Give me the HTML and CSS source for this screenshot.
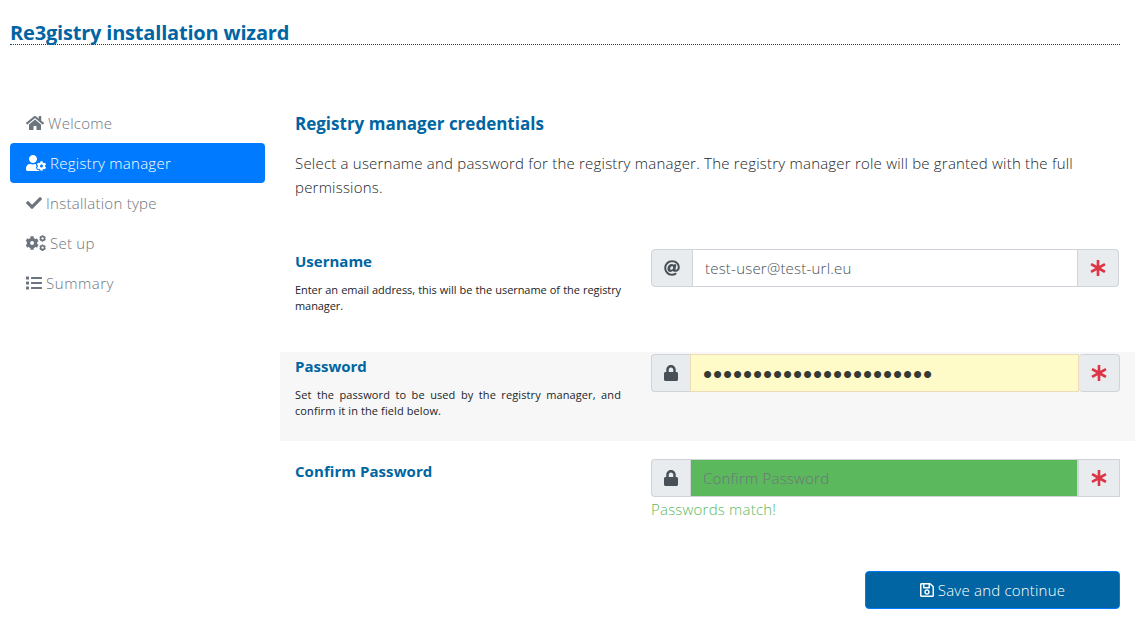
FILE: index.html
```html
<!DOCTYPE html>
<html lang="en">
<head>
<meta charset="utf-8">
<title>Re3gistry installation wizard</title>
<link rel="stylesheet" href="styles.css">
</head>
<body>
<svg class="sprite" aria-hidden="true">
  <symbol id="lock" viewBox="0 0 448 512"><path d="M400 224h-24v-72C376 68.2 307.8 0 224 0S72 68.2 72 152v72H48c-26.5 0-48 21.5-48 48v192c0 26.5 21.5 48 48 48h352c26.5 0 48-21.5 48-48V272c0-26.5-21.5-48-48-48zm-104 0H152v-72c0-39.7 32.3-72 72-72s72 32.3 72 72v72z"/></symbol>
  <symbol id="asterisk" viewBox="0 0 512 512"><path d="M256 42v428M70 152l372 208M442 152L70 360" fill="none" stroke="currentColor" stroke-width="84" stroke-linecap="square"/></symbol>
</svg>
<header class="header"><h1 class="title"><span>Re3gistry installation wizard</span></h1></header>
<div class="layout">
  <nav class="nav">
    <a class="item"><svg class="icon w18" viewBox="0 0 576 512"><path d="M280.37 148.26L96 300.11V464a16 16 0 0 0 16 16l112.06-.29a16 16 0 0 0 15.92-16V368a16 16 0 0 1 16-16h64a16 16 0 0 1 16 16v95.64a16 16 0 0 0 16 16.05L464 480a16 16 0 0 0 16-16V300L295.67 148.26a12.19 12.19 0 0 0-15.3 0zM571.6 251.47L488 182.56V44.05a12 12 0 0 0-12-12h-56a12 12 0 0 0-12 12v72.61L318.47 43a48 48 0 0 0-61 0L4.34 251.47a12 12 0 0 0-1.6 16.9l25.5 31A12 12 0 0 0 45.15 301l235.22-193.74a12.19 12.19 0 0 1 15.3 0L530.9 301a12 12 0 0 0 16.9-1.6l25.5-31a12 12 0 0 0-1.7-16.93z"/></svg><span>Welcome</span></a>
    <a class="item active"><svg class="icon w20" viewBox="0 0 640 512"><path d="M610.5 373.3c2.6-14.1 2.6-28.5 0-42.6l25.8-14.9c3-1.7 4.3-5.2 3.3-8.5-6.7-21.6-18.2-41.2-33.2-57.4-2.3-2.5-6-3.1-9-1.4l-25.8 14.9c-10.9-9.3-23.4-16.5-36.9-21.3v-29.8c0-3.4-2.4-6.4-5.7-7.1-22.3-5-45-4.8-66.2 0-3.3.7-5.7 3.7-5.7 7.1v29.8c-13.5 4.8-26 12-36.9 21.3l-25.8-14.9c-2.9-1.7-6.7-1.1-9 1.4-15 16.2-26.5 35.8-33.2 57.4-1 3.3.4 6.8 3.3 8.5l25.8 14.9c-2.6 14.1-2.6 28.5 0 42.6l-25.8 14.9c-3 1.7-4.3 5.2-3.3 8.5 6.7 21.6 18.2 41.1 33.2 57.4 2.3 2.5 6 3.1 9 1.4l25.8-14.9c10.9 9.3 23.4 16.5 36.9 21.3v29.8c0 3.4 2.4 6.4 5.7 7.1 22.3 5 45 4.8 66.2 0 3.3-.7 5.7-3.7 5.7-7.1v-29.8c13.5-4.8 26-12 36.9-21.3l25.8 14.9c2.9 1.7 6.7 1.1 9-1.4 15-16.2 26.5-35.8 33.2-57.4 1-3.3-.4-6.8-3.3-8.5l-25.8-14.9zM496 400.5c-26.8 0-48.5-21.8-48.5-48.5s21.8-48.5 48.5-48.5 48.5 21.8 48.5 48.5-21.7 48.5-48.5 48.5zM224 256c70.7 0 128-57.3 128-128S294.7 0 224 0 96 57.3 96 128s57.3 128 128 128zm201.2 226.5c-2.3-1.2-4.6-2.6-6.8-3.9l-7.9 4.6c-6 3.4-12.8 5.3-19.6 5.3-10.9 0-21.4-4.6-28.9-12.6-18.3-19.8-32.3-43.9-40.2-69.6-5.5-17.7 1.9-36.4 17.9-45.7l7.9-4.6c-.1-2.6-.1-5.2 0-7.8l-7.9-4.6c-16-9.2-23.4-28-17.9-45.7.9-2.9 2.2-5.8 3.2-8.7-3.8-.3-7.5-1.2-11.4-1.2h-16.7c-22.2 10.2-46.9 16-72.9 16s-50.6-5.8-72.9-16h-16.7C60.2 288 0 348.2 0 422.4V464c0 26.5 21.5 48 48 48h352c10.1 0 19.5-3.2 27.2-8.5-1.2-3.8-2-7.7-2-11.8v-9.2z"/></svg><span>Registry manager</span></a>
    <a class="item"><svg class="icon w16" viewBox="0 0 512 512"><path d="M173.898 439.404l-166.4-166.4c-9.997-9.997-9.997-26.206 0-36.204l36.203-36.204c9.997-9.998 26.207-9.998 36.204 0L192 312.69 432.095 72.596c9.997-9.997 26.207-9.997 36.204 0l36.203 36.204c9.997 9.997 9.997 26.206 0 36.204l-294.4 294.401c-9.998 9.997-26.207 9.997-36.204-.001z"/></svg><span>Installation type</span></a>
    <a class="item"><svg class="icon w20" viewBox="0 0 640 512"><g fill="none" stroke="currentColor"><circle cx="194" cy="256" r="116" stroke-width="106"/><path stroke-width="104" d="M194 42v72M194 398v72M12 151l62 35M314 326l62 35M12 361l62-35M314 186l62-35"/><circle cx="530" cy="108" r="62" stroke-width="50"/><path stroke-width="54" d="M530 4v34M530 178v34M440 56l32 18M588 142l32 18M440 160l32-18M588 74l32-18"/><circle cx="530" cy="404" r="62" stroke-width="50"/><path stroke-width="54" d="M530 300v34M530 474v34M440 352l32 18M588 438l32 18M440 456l32-18M588 370l32-18"/></g></svg><span>Set up</span></a>
    <a class="item"><svg class="icon w16" viewBox="0 0 512 512"><path d="M80 368H16a16 16 0 0 0-16 16v64a16 16 0 0 0 16 16h64a16 16 0 0 0 16-16v-64a16 16 0 0 0-16-16zm0-320H16A16 16 0 0 0 0 64v64a16 16 0 0 0 16 16h64a16 16 0 0 0 16-16V64a16 16 0 0 0-16-16zm0 160H16a16 16 0 0 0-16 16v64a16 16 0 0 0 16 16h64a16 16 0 0 0 16-16v-64a16 16 0 0 0-16-16zm416 176H176a16 16 0 0 0-16 16v32a16 16 0 0 0 16 16h320a16 16 0 0 0 16-16v-32a16 16 0 0 0-16-16zm0-320H176a16 16 0 0 0-16 16v32a16 16 0 0 0 16 16h320a16 16 0 0 0 16-16V80a16 16 0 0 0-16-16zm0 160H176a16 16 0 0 0-16 16v32a16 16 0 0 0 16 16h320a16 16 0 0 0 16-16v-32a16 16 0 0 0-16-16z"/></svg><span class="wide">Summary</span></a>
  </nav>
  <main class="main">
    <h2 class="heading">Registry manager credentials</h2>
    <p class="intro">Select a username and password for the registry manager. The registry manager role will be granted with the full<br>permissions.</p>
    <section class="row">
      <div class="info"><h3 class="label">Username</h3><p class="help tight">Enter an email address, this will be the username of the registry manager.</p></div>
      <div class="field"><div class="group user">
        <span class="addon first"><svg class="icon w16" viewBox="0 0 512 512"><path d="M256 8C118.941 8 8 118.919 8 256c0 137.059 110.919 248 248 248 48.154 0 95.342-14.14 135.408-40.223 12.005-7.815 14.625-24.288 5.552-35.372l-10.177-12.433c-7.671-9.371-21.179-11.667-31.373-5.129C325.92 429.757 291.314 440 256 440c-101.458 0-184-82.542-184-184S154.542 72 256 72c100.139 0 184 57.619 184 160 0 38.786-21.093 79.742-58.17 83.693-17.349-.454-16.91-12.857-13.476-30.024l23.433-121.11C394.653 149.75 383.308 136 368.225 136h-44.981a13.518 13.518 0 0 0-13.432 11.993l-.01.092c-14.697-17.901-40.448-21.775-59.971-21.775-74.58 0-137.831 62.234-137.831 151.46 0 65.303 36.785 105.87 96 105.87 26.984 0 57.369-15.637 74.991-38.333 9.522 34.104 40.613 34.103 70.71 34.103C462.609 379.41 504 307.798 504 232 504 95.653 394.023 8 256 8zm-21.68 304.43c-22.249 0-36.07-15.623-36.07-40.771 0-44.993 30.779-72.729 58.63-72.729 22.292 0 35.601 15.241 35.601 40.77 0 45.061-33.875 72.73-58.161 72.73z"/></svg></span>
        <div class="input">test-user@test-url.eu</div>
        <span class="addon last"><svg class="icon w16"><use href="#asterisk"/></svg></span>
      </div></div>
    </section>
    <section class="row shaded">
      <div class="info"><h3 class="label">Password</h3><p class="help">Set the password to be used by the registry manager, and confirm it in the field below.</p></div>
      <div class="field"><div class="group">
        <span class="addon first"><svg class="icon w14"><use href="#lock"/></svg></span>
        <div class="input filled">•••••••••••••••••••••••</div>
        <span class="addon last rounded"><svg class="icon w16"><use href="#asterisk"/></svg></span>
      </div></div>
    </section>
    <section class="row">
      <div class="info"><h3 class="label confirm">Confirm Password</h3></div>
      <div class="field"><div class="group">
        <span class="addon first"><svg class="icon w14"><use href="#lock"/></svg></span>
        <div class="input match">Confirm Password</div>
        <span class="addon last square"><svg class="icon w16"><use href="#asterisk"/></svg></span>
      </div><div class="message">Passwords match!</div></div>
    </section>
    <button class="save"><svg class="icon w14" viewBox="0 0 448 512"><path d="M433.941 129.941l-83.882-83.882A48 48 0 0 0 316.118 32H48C21.49 32 0 53.49 0 80v352c0 26.51 21.49 48 48 48h352c26.51 0 48-21.49 48-48V163.882a48 48 0 0 0-14.059-33.941zM272 80v80H144V80h128zm122 352H54a6 6 0 0 1-6-6V86a6 6 0 0 1 6-6h42v104c0 13.255 10.745 24 24 24h176c13.255 0 24-10.745 24-24V83.882l78.243 78.243a6 6 0 0 1 1.757 4.243V426a6 6 0 0 1-6 6zM224 232c-48.523 0-88 39.477-88 88s39.477 88 88 88 88-39.477 88-88-39.477-88-88-88zm0 128c-22.056 0-40-17.944-40-40s17.944-40 40-40 40 17.944 40 40-17.944 40-40 40z"/></svg><span>Save and continue</span></button>
  </main>
</div>
</body>
</html>
```
FILE: styles.css
```css
* { box-sizing: border-box; }
body { margin: 0; height: 619px; overflow: hidden; background: #fff; color: #212529; font: 300 15px/24px "Open Sans", "Noto Sans", sans-serif; letter-spacing: 0.21px; }
h1, h2, h3, p { margin: 0; }
.sprite { display: none; }
.header { padding: 20px 20px 0 10px; }
.title { height: 25px; border-bottom: 1px dotted #004b7a; color: #0065a2; font-size: 20px; line-height: 25px; font-weight: 700; letter-spacing: -0.19px; white-space: nowrap; }
.layout { display: grid; grid-template-columns: 255px 855px; column-gap: 15px; padding: 58px 0 0 10px; }
.nav { display: flex; flex-direction: column; letter-spacing: 0.26px; }
.wide { letter-spacing: 0.55px; }
.item { display: flex; align-items: center; gap: 4px; height: 40px; padding: 0 16px; border-radius: 4px; color: #6c757d; white-space: nowrap; }
.active { background: #007bff; color: #fff; }
.icon { flex: none; height: 16px; fill: currentColor; }
.w14 { width: 14px; }
.w16 { width: 16px; }
.w18 { width: 18px; }
.w20 { width: 20px; }
.main { display: flex; flex-direction: column; padding-top: 9px; }
.heading { height: 24px; margin-left: 15px; color: #0065a2; font-size: 17px; line-height: 24px; font-weight: 700; letter-spacing: 0; }
.intro { height: 48px; margin: 15px 0 48px 15px; white-space: nowrap; }
.row { display: grid; grid-template-columns: 326px 469px; column-gap: 30px; height: 89px; margin-bottom: 16px; padding: 2px 15px 0; }
.shaded { background: #f7f7f7; }
.label { height: 24px; color: #0065a2; font-size: 15px; line-height: 24px; font-weight: 700; letter-spacing: 0; }
.confirm { letter-spacing: 0.06px; }
.help { margin-top: 9px; font-size: 11px; line-height: 16px; font-weight: 400; letter-spacing: 0.1px; text-align: justify; }
.tight { letter-spacing: -0.08px; word-spacing: -0.8px; }
.group { display: flex; height: 38px; }
.user { width: 468px; }
.addon { display: flex; align-items: center; justify-content: center; flex: none; border: 1px solid #ced4da; background: #e9ecef; color: #495057; }
.first { width: 39px; border-right: 0; border-radius: 4px 0 0 4px; }
.user .first { width: 42px; border-right: 1px solid #ced4da; }
.last { width: 42px; border-left: 0; border-radius: 0 4px 4px 0; color: #dc3545; }
.user .last { width: 41px; }
.rounded { width: 41px; border-radius: 4px; }
.square { border-left: 2px solid #ced4da; border-radius: 0; width: 43px; }
.input { flex: 1; padding: 0 12px; border: 1px solid #ced4da; border-left-width: 0; color: #495057; line-height: 37px; white-space: nowrap; }
.filled { border: 1px solid #eddcb8; background: #fffbc8; color: #343a35; font-family: "DejaVu Sans", sans-serif; font-size: 26px; line-height: 38px; letter-spacing: 0.9px; }
.match { border-left-width: 1px; border-right: 0; background: #5cb85c; color: #6c757d; }
.message { color: #5cb85c; }
.save { display: flex; align-items: center; justify-content: center; gap: 4px; width: 255px; height: 38px; margin: 9px 15px 0 auto; padding: 0; border: 1px solid #007bff; border-radius: 4px; background: #0065a2; color: #fff; font: inherit; letter-spacing: 0.2px; }
```
